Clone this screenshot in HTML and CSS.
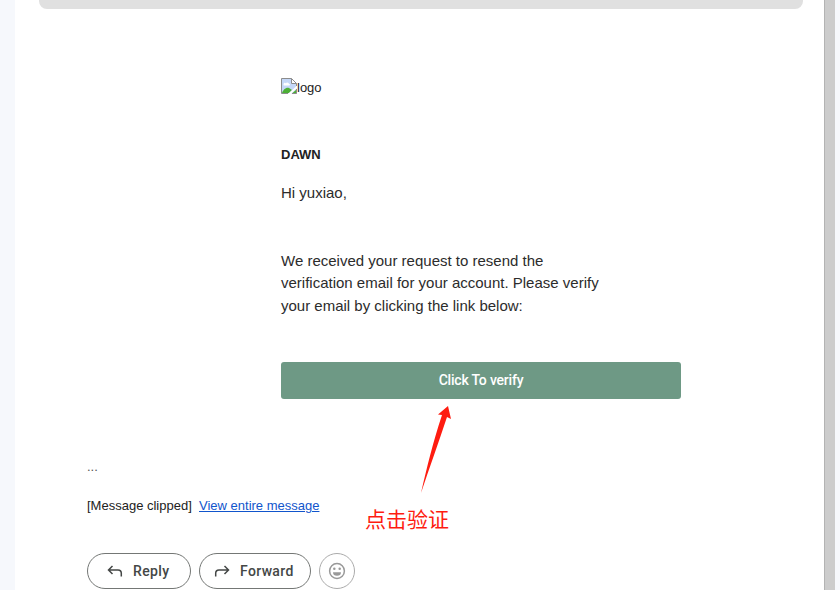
FILE: index.html
```html
<!DOCTYPE html>
<html lang="en">
<head>
<meta charset="utf-8">
<title>Mail</title>
<link rel="stylesheet" href="styles.css">
</head>
<body>
<div class="app">
  <main class="mail">
    <div class="banner"></div>
    <section class="letter">
      <div class="logo">
        <svg width="16" height="16" viewBox="0 0 16 16">
          <path d="M.5.5h10l5 5v10H.5z" fill="#c5d8f8"/>
          <path d="M2.500 6.500c0-2 2-2 2.500-1 .5-2 3-1 3 .5 1.500 0 1.500 1.500 0 1.500H3.500c-1 0-1-.5-1-1z" fill="#fff"/>
          <path d="M1 15c1-3 4-6 7-5l3 2-3 3z" fill="#4caf35"/>
          <path d="M7 16 16 7.500v2.500l-6 6z" fill="#fff"/>
          <path d="M11 15.500 15.500 11.500v4z" fill="#4caf35"/>
          <path d="M10.500.5v5h5z" fill="#fff"/>
          <path d="M7 15.500H.5V.5h10l5 5V8M10.500.5v5h5M15.500 11v4.500H11" fill="none" stroke="#8c8c8c"/>
        </svg><span>logo</span>
      </div>
      <h1 class="brand">DAWN</h1>
      <p class="greeting">Hi yuxiao,</p>
      <p class="message">We received your request to resend the<br>verification email for your account. Please verify<br>your email by clicking the link below:</p>
      <a class="verify">Click To verify</a>
      <svg class="arrow" width="34" height="90" viewBox="0 0 34 90">
        <path d="M28 1 31 14 27 12C18 39 9 64 1 88 7 62 13 37 22 10L18 9.500z" fill="#fe1c10"/>
      </svg>
      <span class="note" lang="zh-CN">点击验证</span>
    </section>
    <div class="dots">...</div>
    <div class="clipped">[Message clipped]&nbsp; <a>View entire message</a></div>
    <div class="actions">
      <div class="btn reply">
        <svg width="16" height="14" viewBox="0 0 16 14"><path d="M5.500 2 1.500 6l4 4M1.500 6H11a3.300 3.300 0 0 1 3.300 3.300V12.500" /></svg>
        <span>Reply</span>
      </div>
      <div class="btn forward">
        <svg width="16" height="14" viewBox="0 0 16 14"><path d="M10.500 2 14.500 6l-4 4M14.500 6H5A3.300 3.300 0 0 0 1.700 9.300V12.500" /></svg>
        <span>Forward</span>
      </div>
      <div class="btn emoji">
        <svg width="18" height="18" viewBox="0 0 18 18"><circle cx="9" cy="9" r="7.400"/><path d="M5 10.200h8a4 3.600 0 0 1-8 0z" class="fill"/><circle cx="6.300" cy="6.800" r="1.250" class="fill"/><circle cx="11.700" cy="6.800" r="1.250" class="fill"/></svg>
      </div>
    </div>
  </main>
  <div class="scrollbar"></div>
</div>
</body>
</html>
```
FILE: styles.css
```css
body {
  margin: 0;
  background: #f6f8fc;
  font-family: "Liberation Sans", Arial, sans-serif;
  color: #222;
}
.app {
  display: flex;
  width: 820px;
  height: 590px;
  margin-left: 15px;
  overflow: hidden;
}
.mail {
  width: 809px;
  box-sizing: border-box;
  background: #fff;
  padding: 0 21px 0 24px;
}
.scrollbar {
  width: 10px;
  background: #ccc;
  border-left: 1px solid #b3b3b3;
}
.banner {
  height: 9px;
  background: #e0e0e0;
  border-radius: 0 0 8px 8px;
}
.letter {
  position: relative;
  width: 400px;
  height: 450px;
  margin-left: 242px;
  padding-top: 1px;
  box-sizing: border-box;
}
.logo {
  display: flex;
  height: 16px;
  margin-top: 68px;
  font-size: 13px;
  line-height: 20px;
}
.brand {
  margin: 53px 0 0;
  font-size: 13px;
  line-height: 16px;
}
.greeting {
  margin: 19px 0 0;
  font-size: 15px;
  line-height: 22px;
  color: #2c2c2c;
}
.message {
  margin: 45.800px 0 0;
  font-size: 15px;
  line-height: 22.500px;
  color: #2c2c2c;
  white-space: nowrap;
}
.verify {
  display: block;
  margin-top: 44.700px;
  height: 37px;
  border-radius: 3px;
  background: #6e9985;
  color: #fff;
  font: 500 14px/37px Roboto, sans-serif;
  letter-spacing: -0.200px;
  text-align: center;
}
.arrow {
  position: absolute;
  left: 139px;
  top: 396px;
}
.note {
  position: absolute;
  left: 84px;
  top: 493px;
  font: 21px/32px "Noto Sans CJK SC", sans-serif;
  color: #fe1c10;
  white-space: nowrap;
}
.dots {
  margin-left: 48px;
  font-size: 13px;
  line-height: 16px;
  color: #555;
}
.clipped {
  margin: 23px 0 0 48px;
  font-size: 13px;
  line-height: 16px;
}
.clipped a { color: #15c; text-decoration: underline; }
.actions {
  display: flex;
  gap: 8px;
  margin: 39px 0 0 48px;
}
.btn {
  display: flex;
  align-items: center;
  box-sizing: border-box;
  height: 36px;
  border: 1px solid #747775;
  border-radius: 18px;
  color: #444746;
  font: 500 14px/20px Roboto, sans-serif;
  letter-spacing: 0.350px;
}
.btn svg { fill: none; stroke: #444746; stroke-width: 1.500; }
.reply { width: 104px; padding-left: 19px; gap: 10px; }
.forward { width: 112px; padding-left: 14px; gap: 10px; }
.emoji { width: 36px; justify-content: center; border-color: #ababab; }
.emoji svg { stroke: #999; }
.emoji .fill { fill: #999; stroke: none; }
```
